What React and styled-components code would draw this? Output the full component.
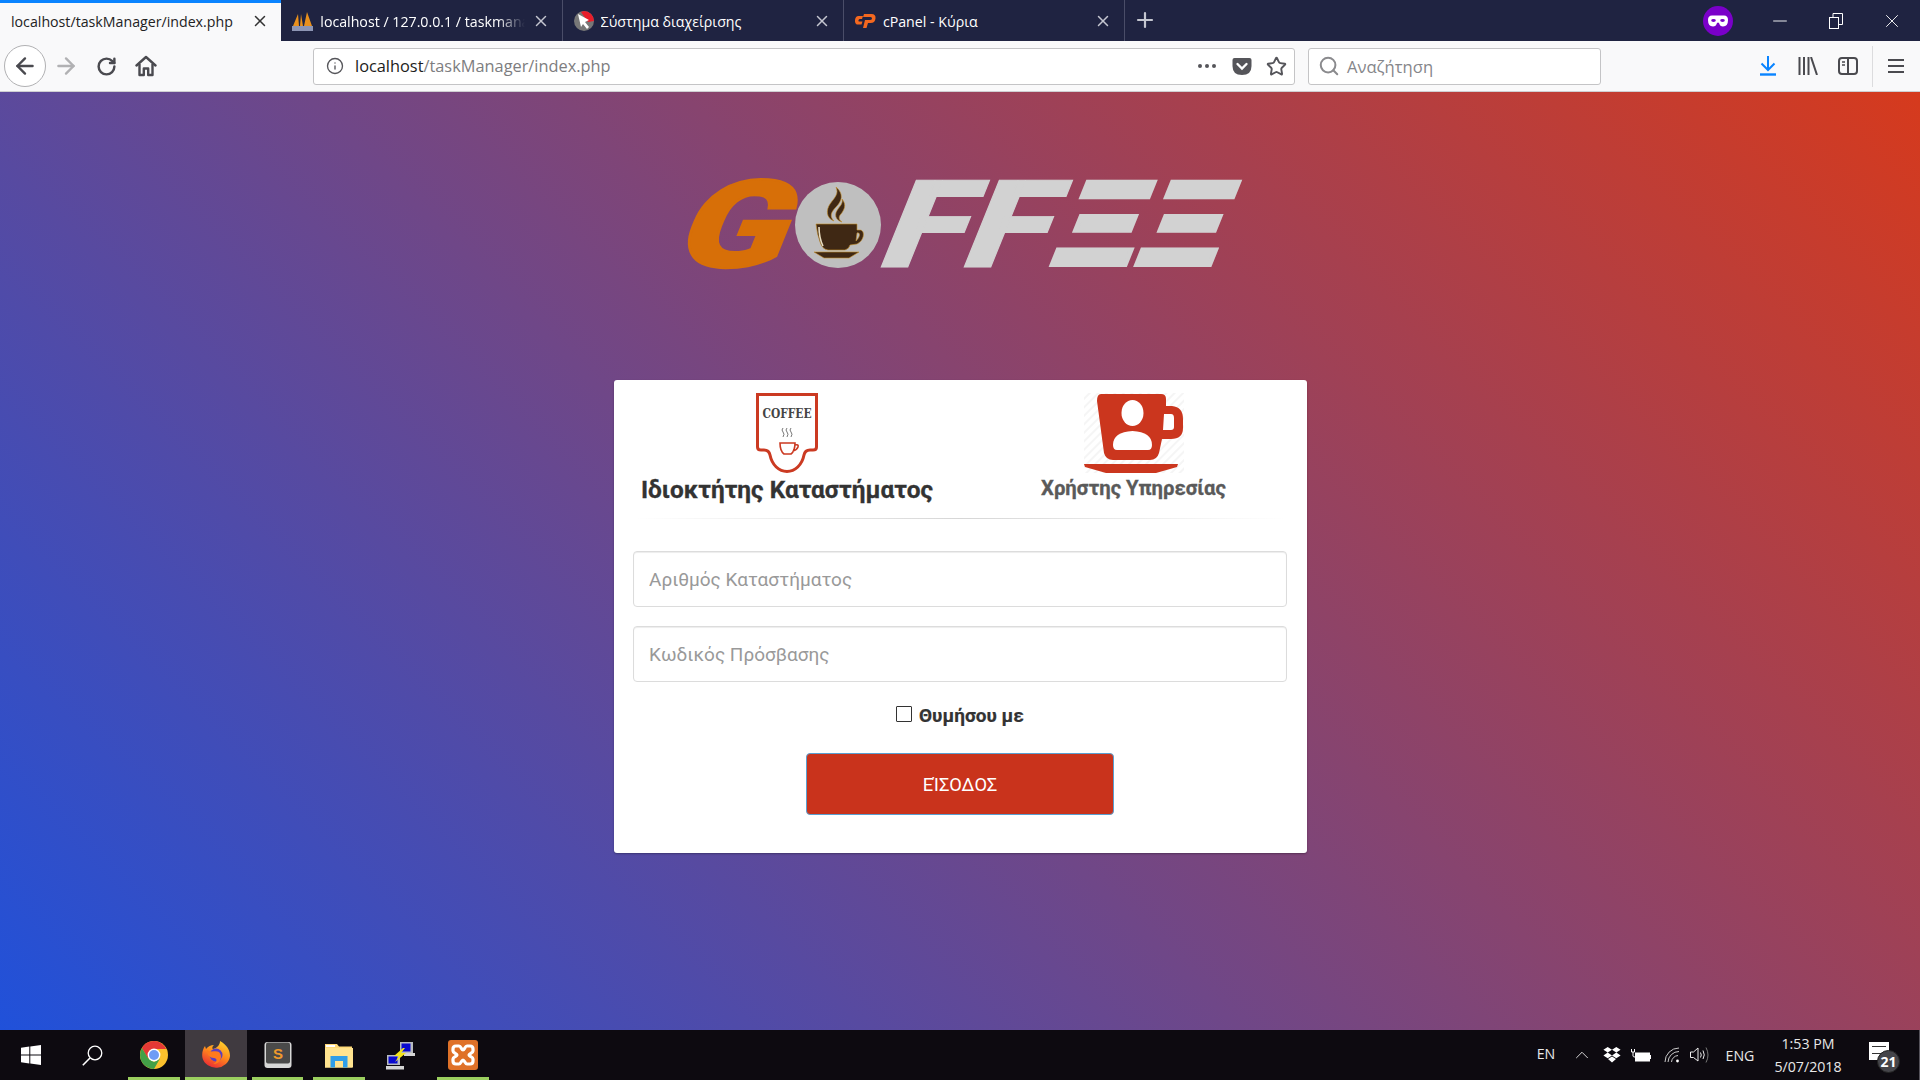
import styled, { createGlobalStyle } from "styled-components";
import { ArrowLeft, ArrowRight, RotateCw, Info, Star, Search, X, Plus, Minus, ChevronUp } from "lucide-react";

const GlobalStyle = createGlobalStyle`
  html, body {
    margin: 0;
    padding: 0;
    height: 100%;
    overflow: hidden;
  }
  * {
    box-sizing: border-box;
  }
`;

const Screen = styled.div`
  width: 1920px;
  height: 1080px;
  display: flex;
  flex-direction: column;
  font-family: "Open Sans", "Noto Sans", sans-serif;
`;

/* browser chrome */
const TabBar = styled.div`
  height: 41px;
  background: #1f2341;
  display: flex;
  align-items: stretch;
  color: #fff;
`;

const Tab = styled.div`
  width: 281.3px;
  display: flex;
  align-items: center;
  gap: 7px;
  padding: 0 12px 0 11px;
  background: ${(p) => (p.$active ? "#f9f9fa" : "transparent")};
  color: ${(p) => (p.$active ? "#222" : "#fff")};
  border-right: ${(p) => (p.$active ? "none" : "1px solid #4a4d68")};
  box-shadow: ${(p) => (p.$active ? "inset 0 3px 0 #0a84ff" : "none")};
`;

const TabTitle = styled.span`
  flex: 1;
  font-size: 14.2px;
  white-space: nowrap;
  overflow: hidden;
  padding-top: 1px;
  mask-image: ${(p) => (p.$fade ? "linear-gradient(to left, transparent, #000 28px)" : "none")};
`;

const TabClose = styled.span`
  width: 18px;
  display: flex;
  justify-content: center;
  color: ${(p) => (p.$active ? "#333" : "#c4c6d0")};
`;

const NewTab = styled.div`
  width: 40px;
  display: flex;
  align-items: center;
  justify-content: center;
  padding-bottom: 2px;
  color: #c4c6d0;
`;

const TabSpacer = styled.div`
  flex: 1;
`;

const MaskBadge = styled.div`
  width: 30px;
  height: 30px;
  border-radius: 50%;
  background: #7a00c9;
  align-self: center;
  display: flex;
  align-items: center;
  justify-content: center;
  margin-right: 19px;
`;

const WinButton = styled.div`
  width: 56px;
  display: flex;
  align-items: center;
  justify-content: center;
  color: #fff;
`;

const Toolbar = styled.div`
  height: 51px;
  background: #f9f9fa;
  border-bottom: 1px solid #cfcfd2;
  display: flex;
  align-items: center;
  color: #4a4a4f;
`;

const BackButton = styled.div`
  width: 42px;
  height: 42px;
  margin-left: 4px;
  border: 1px solid #b1b1b3;
  border-radius: 50%;
  background: #fff;
  display: flex;
  align-items: center;
  justify-content: center;
`;

const ToolButton = styled.div`
  width: 40px;
  display: flex;
  justify-content: center;
  align-items: center;
  color: ${(p) => p.$color || "#4a4a4f"};
`;

const UrlBar = styled.div`
  width: 982px;
  height: 37px;
  margin-left: 147px;
  background: #fff;
  border: 1px solid #c4c4c6;
  border-radius: 3px;
  display: flex;
  align-items: center;
  padding: 0 0 0 12px;
`;

const UrlText = styled.span`
  flex: 1;
  margin-left: 11px;
  font-size: 16.35px;
  color: #7d7d80;
  b {
    font-weight: 400;
    color: #1c1c20;
  }
`;

const UrlAction = styled.span`
  width: 35px;
  display: flex;
  justify-content: center;
  align-items: center;
  color: #55555a;
`;

const SearchBar = styled.div`
  width: 293px;
  height: 37px;
  margin: 0 147px 0 13px;
  background: #fff;
  border: 1px solid #c4c4c6;
  border-radius: 3px;
  display: flex;
  align-items: center;
  gap: 7px;
  padding-left: 9px;
  font-size: 16.6px;
  color: #86868a;
`;

const ToolSeparator = styled.div`
  width: 1px;
  height: 41px;
  margin: 0 3px 0 4px;
  background: #dcdcde;
`;

/* login page */
const Page = styled.main`
  flex: 1;
  display: flex;
  flex-direction: column;
  align-items: center;
  background: linear-gradient(45deg, #2051da, #d63a1d);
`;

const LogoBox = styled.svg`
  display: block;
  width: 590px;
  height: 120px;
  margin: 68px 0 100px 10px;
  overflow: visible;
`;

const LogoLetter = styled.text`
  font-family: Roboto, "Liberation Sans", sans-serif;
  font-weight: 900;
  font-size: ${(p) => p.$size || 122}px;
  fill: ${(p) => p.$fill};
  stroke: ${(p) => p.$fill};
  stroke-width: ${(p) => p.$stroke || 0}px;
`;

const Card = styled.section`
  width: 693px;
  height: 473px;
  background: #fff;
  border-radius: 3px;
  padding: 13px 0 0;
  box-shadow: 0 1px 2px rgba(0, 0, 0, 0.3);
`;

const RoleRow = styled.div`
  display: grid;
  grid-template-columns: 347px 346px;
  height: 125px;
`;

const Role = styled.div`
  display: flex;
  flex-direction: column;
  align-items: center;
`;

const RoleIcon = styled.svg`
  display: block;
  height: 80px;
  width: ${(p) => p.$w}px;
`;

const RoleTitle = styled.div`
  font-family: Roboto, "Liberation Sans", sans-serif;
  font-weight: 700;
  font-size: ${(p) => (p.$current ? "24.4px" : "20.3px")};
  line-height: 30px;
  margin-top: ${(p) => (p.$current ? "2px" : "0")};
  -webkit-text-stroke: 0.3px currentColor;
  color: ${(p) => (p.$current ? "#333" : "#5a5a5a")};
`;

const Divider = styled.div`
  height: 1px;
  margin: 0 19px;
  background: linear-gradient(to right, rgba(0, 0, 0, 0), rgba(0, 0, 0, 0.16), rgba(0, 0, 0, 0));
`;

const Form = styled.form`
  display: flex;
  flex-direction: column;
  align-items: center;
  padding: 32px 19px 0;
`;

const Field = styled.input`
  width: 654px;
  height: 56px;
  margin-bottom: 19px;
  padding: 0 15px;
  border: 1px solid #dcdcdc;
  border-radius: 4px;
  background: #fff;
  box-shadow: inset 0 1px 1px rgba(0, 0, 0, 0.075);
  font-family: Roboto, "Liberation Sans", sans-serif;
  font-size: 19px;
  outline: none;
  &::placeholder {
    color: #999;
    opacity: 1;
  }
`;

const Remember = styled.label`
  display: flex;
  align-items: center;
  gap: 7px;
  height: 24px;
  margin-top: 2px;
  font-family: Roboto, "Liberation Sans", sans-serif;
  font-weight: 700;
  font-size: 19px;
  -webkit-text-stroke: 0.2px currentColor;
  color: #333;
`;

const Tick = styled.span`
  display: block;
  width: 16px;
  height: 16px;
  border: 1px solid #333;
  border-radius: 1px;
  background: #fff;
  margin-top: -2px;
`;

const Submit = styled.button`
  width: 308px;
  height: 62px;
  margin-top: 26px;
  background: #c9331c;
  border: 1px solid #5a9fd0;
  border-radius: 4px;
  color: #fff;
  font-family: Roboto, "Liberation Sans", sans-serif;
  font-size: 18.3px;
`;

/* windows taskbar */
const Taskbar = styled.footer`
  height: 50px;
  background: #0d0a10;
  display: flex;
  align-items: stretch;
  color: #e8e8e8;
`;

const TaskItem = styled.div`
  width: ${(p) => (p.$active ? "61.7px" : p.$running ? "51.7px" : "61.7px")};
  margin: 0 ${(p) => (p.$running && !p.$active ? "5px" : "0")};
  display: flex;
  align-items: center;
  justify-content: center;
  background: ${(p) => (p.$active ? "#403a40" : "transparent")};
  box-shadow: ${(p) => (p.$running ? "inset 0 -3px 0 #9bcf5f" : "none")};
`;

const Tray = styled.div`
  margin-left: auto;
  display: flex;
  align-items: stretch;
  border-right: 1px solid #55525a;
  padding-right: 13px;
  font-size: 14.2px;
`;

const TrayItem = styled.div`
  width: ${(p) => p.$w}px;
  display: flex;
  flex-direction: column;
  align-items: center;
  justify-content: center;
  padding-bottom: ${(p) => p.$lift || 0}px;
`;

const Clock = styled.div`
  display: flex;
  flex-direction: column;
  align-items: center;
  gap: 4px;
  line-height: 19px;
`;

const NoticeWrap = styled.div`
  position: relative;
  width: 20px;
  height: 18px;
  margin: 0 0 9px 0;
  background: #fff;
`;

const NoticeLines = styled.div`
  margin: 4px 3px 0;
  height: 8px;
  border-top: 1px solid #333;
  border-bottom: 1px solid #333;
`;

const NoticeBadge = styled.div`
  position: absolute;
  left: 8px;
  top: 8px;
  width: 23px;
  height: 23px;
  border-radius: 50%;
  background: #45454a;
  border: 1px solid #222;
  color: #fff;
  font-weight: 700;
  font-size: 14px;
  line-height: 21px;
  text-align: center;
`;

const PmaIcon = () => (
  <svg width="21" height="20" viewBox="0 0 21 20">
    <path d="M1 15 L6 3 L7 15Z M8 15 L9 3 L11 15Z M12 15 L15 1 L20 15Z" fill="#e9901c" />
    <rect x="0" y="15" width="21" height="5" fill="#8d95b4" />
  </svg>
);

const CursorIcon = () => (
  <svg width="20" height="20" viewBox="0 0 20 20">
    <circle cx="10" cy="10" r="10" fill="#777" />
    <path d="M10 0 A10 10 0 0 1 20 10 L14 11 L7 1Z" fill="#e81d2a" />
    <path d="M4 3 L15 9 L11 11 L15 16 L13 18 L9 13 L7 16Z" fill="#fff" />
  </svg>
);

const CpanelIcon = () => (
  <svg width="21" height="20" viewBox="0 0 21 20">
    <path d="M8 5 H3.5 Q0.5 5 0 9 Q-0.3 13.5 3 13.5 H6.5 L7.5 10.5 H4 Q3.2 10.5 3.5 9.2 Q3.8 8 5 8 H7Z" fill="#f4681f" />
    <path d="M9 3 H16.5 Q21 3 20.5 7.5 Q20 12 15.5 12 H13 L11.5 17 H8 L10 9 H15 Q16.8 9 17 7.5 Q17.2 6 15.5 6 H8Z" fill="#f4681f" />
  </svg>
);

const MaskIcon = () => (
  <svg width="20" height="12" viewBox="0 0 20 12">
    <path d="M4 0.5 H16 Q20 0.5 20 5 Q20 11.5 15 11.5 Q12 11.5 11 8 Q10 7 9 8 Q8 11.5 5 11.5 Q0 11.5 0 5 Q0 0.5 4 0.5Z" fill="#fff" />
    <ellipse cx="5.5" cy="5.5" rx="2.3" ry="1.4" fill="#7a00c9" />
    <ellipse cx="14.5" cy="5.5" rx="2.3" ry="1.4" fill="#7a00c9" />
  </svg>
);

const RestoreIcon = () => (
  <svg width="14" height="16" viewBox="0 0 14 16" fill="none" stroke="#fff" strokeWidth="1">
    <rect x="0.5" y="4.5" width="9" height="11" />
    <path d="M4 4 V0.5 H13.5 V11.5 H10" />
  </svg>
);

const HouseIcon = () => (
  <svg width="22" height="22" viewBox="0 0 22 22" fill="none" stroke="#4a4a4f" strokeWidth="2.4" strokeLinejoin="round">
    <path d="M1.5 10.5 L11 2 L20.5 10.5" strokeLinecap="round" />
    <path d="M4.5 9 V20 H8.8 V13.5 H13.2 V20 H17.5 V9" />
  </svg>
);

const PocketIcon = () => (
  <svg width="20" height="19" viewBox="0 0 20 19">
    <path d="M2.5 1 H17.5 Q19.5 1 19.5 3 V9 Q19.5 18 10 18 Q0.5 18 0.5 9 V3 Q0.5 1 2.5 1Z" fill="#55555a" />
    <path d="M5.5 7 L10 11.5 L14.5 7" fill="none" stroke="#fff" strokeWidth="2.4" strokeLinecap="round" />
  </svg>
);

const DownloadIcon = () => (
  <svg width="18" height="20" viewBox="0 0 18 20" fill="none" stroke="#0a84ff" strokeWidth="2">
    <path d="M9 0 V13 M2.5 7.5 L9 14 L15.5 7.5" />
    <path d="M1 18.5 H17" strokeWidth="2.4" />
  </svg>
);

const LibraryIcon = () => (
  <svg width="20" height="18" viewBox="0 0 20 18" fill="none" stroke="#4a4a4f" strokeWidth="2">
    <path d="M1.5 0 V18 M6 0 V18 M10.5 0 V18 M13 0 L19 18" />
  </svg>
);

const SidebarIcon = () => (
  <svg width="20" height="18" viewBox="0 0 20 18" fill="none" stroke="#4a4a4f" strokeWidth="2">
    <rect x="1" y="1" width="18" height="16" rx="3" />
    <path d="M10 1 V17" />
    <path d="M4 5 H7 M4 8 H7" strokeWidth="1.6" />
  </svg>
);

const MenuIcon = () => (
  <svg width="16" height="14" viewBox="0 0 16 14" fill="#4a4a4f">
    <rect width="16" height="2" />
    <rect y="6" width="16" height="2" />
    <rect y="12" width="16" height="2" />
  </svg>
);

const WindowsIcon = () => (
  <svg width="20" height="20" viewBox="0 0 20 20" fill="#fff">
    <path d="M0 2.8 L8.3 1.6 V9.5 H0Z M9.3 1.5 L20 0 V9.5 H9.3Z M0 10.5 H8.3 V18.4 L0 17.2Z M9.3 10.5 H20 V20 L9.3 18.5Z" />
  </svg>
);

const TaskSearchIcon = () => (
  <svg width="21" height="21" viewBox="0 0 21 21" fill="none" stroke="#fff" strokeWidth="1.3">
    <circle cx="13" cy="8" r="6.8" />
    <path d="M8 13 L0.8 20.3" strokeWidth="1.6" />
  </svg>
);

const ChromeIcon = () => (
  <svg width="28" height="28" viewBox="0 0 28 28">
    <circle cx="14" cy="14" r="14" fill="#fbc02d" />
    <path d="M14 0 A14 14 0 0 0 1.9 7 L8 17.5 L14 8 H26.1 A14 14 0 0 0 14 0Z" fill="#e53935" />
    <path d="M1.9 7 A14 14 0 0 0 14 28 L20 17.5 L14 21 L8 17Z" fill="#43a047" />
    <circle cx="14" cy="14" r="6.4" fill="#fff" />
    <circle cx="14" cy="14" r="5" fill="#6f9cf5" />
  </svg>
);

const FirefoxIcon = () => (
  <svg width="28" height="28" viewBox="0 0 28 28">
    <defs>
      <linearGradient id="foxFlame" x1="0.8" y1="0" x2="0.3" y2="1">
        <stop offset="0" stopColor="#ffd52e" />
        <stop offset="0.5" stopColor="#ff8a1c" />
        <stop offset="1" stopColor="#ea2a35" />
      </linearGradient>
    </defs>
    <path d="M18 0 C25 4 28 9 28 15 A14 13 0 0 1 0.5 17 C-0.5 12 1 8 3 5 L4 8 C6 5.5 9 4 12 4 C10 6 10 7.5 11 8 C15 7 18 4 18 0Z" fill="url(#foxFlame)" />
    <circle cx="14" cy="14" r="6.5" fill="#5a3fc0" />
    <path d="M5 9 C8 12 14 9 17 11 C21 15 19 23 11 23 C16 21 15 17 12 17 C8 17 5 14 5 9Z" fill="#ff7a1c" />
  </svg>
);

const SublimeIcon = () => (
  <svg width="28" height="28" viewBox="0 0 28 28">
    <rect x="0.5" y="1" width="27" height="26" rx="3" fill="#d8d8d8" />
    <rect x="2" y="1.5" width="24" height="21" rx="2" fill="#4a4a4a" />
    <text x="14" y="18" textAnchor="middle" fontFamily="Liberation Sans, sans-serif" fontWeight="700" fontSize="15" fill="#f09a2c">
      S
    </text>
  </svg>
);

const FolderIcon = () => (
  <svg width="28" height="25" viewBox="0 0 28 25">
    <path d="M0 1 H12 L14 3.5 H27 V24.5 H0Z" fill="#ffd978" />
    <path d="M0 5 H28 V24.5 H0Z" fill="#ffe38f" />
    <path d="M5.5 24.5 V13 H22.5 V24.5 H18 V18 H10 V24.5Z" fill="#2f9ee8" />
    <rect x="1" y="2" width="9" height="2" fill="#fff" />
  </svg>
);

const NetworkIcon = () => (
  <svg width="29" height="29" viewBox="0 0 29 29">
    <rect x="14" y="1" width="13" height="11" fill="#b8bcc0" />
    <rect x="15.5" y="2.5" width="9" height="8" fill="#0a0ad0" />
    <rect x="18" y="12" width="11" height="3" fill="#d5d5d5" />
    <rect x="1" y="14" width="13" height="10" fill="#b8bcc0" />
    <rect x="2.5" y="15.5" width="9" height="7" fill="#0a0ad0" />
    <rect x="0" y="25" width="18" height="3.5" fill="#d5d5d5" />
    <path d="M17 7 L8 15 L13 15 L9 21 L20 12 L15 12 L19 7Z" fill="#f5e61c" />
  </svg>
);

const XamppIcon = () => (
  <svg width="30" height="30" viewBox="0 0 30 30">
    <rect width="30" height="30" rx="3" fill="#df7128" />
    <path d="M8 6 H11 C13 6 13.5 10 15 10 C16.5 10 17 6 19 6 H22 C24 6 25 7 25 9 V11 C25 13 21 13.5 21 15 C21 16.5 25 17 25 19 V21 C25 23 24 24 22 24 H19 C17 24 16.5 20 15 20 C13.5 20 13 24 11 24 H8 C6 24 5 23 5 21 V19 C5 17 9 16.5 9 15 C9 13.5 5 13 5 11 V9 C5 7 6 6 8 6Z" fill="none" stroke="#fff" strokeWidth="3.2" />
  </svg>
);

const DropboxIcon = () => (
  <svg width="18" height="16" viewBox="0 0 18 16" fill="#fff">
    <path d="M4.7 0 L9 2.8 L4.7 5.6 L0.4 2.8Z M13.3 0 L17.6 2.8 L13.3 5.6 L9 2.8Z M4.7 5.6 L9 8.4 L4.7 11.2 L0.4 8.4Z M13.3 5.6 L17.6 8.4 L13.3 11.2 L9 8.4Z M9 9.4 L13 12 L9 15.5 L5 12Z" />
  </svg>
);

const BatteryIcon = () => (
  <svg width="20" height="13" viewBox="0 0 20 13" fill="#fff">
    <path d="M0.5 0 V3 H3.5 V0 M2 3 V7 Q2 8 4 8" fill="none" stroke="#fff" />
    <rect x="4" y="3.5" width="15" height="9" />
    <rect x="19" y="6" width="1" height="4" />
  </svg>
);

const WifiIcon = () => (
  <svg width="16" height="16" viewBox="0 0 16 16" fill="none" stroke="#ccc" strokeWidth="1">
    <path d="M1 15 A14 14 0 0 1 15 1" />
    <path d="M4 15 A11 11 0 0 1 15 4.5" />
    <path d="M7.5 15 A7 7 0 0 1 14 8.5" />
    <circle cx="13.5" cy="14" r="1.4" fill="#fff" stroke="none" />
  </svg>
);

const VolumeIcon = () => (
  <svg width="20" height="16" viewBox="0 0 20 16" fill="none" stroke="#eee" strokeWidth="1">
    <path d="M0.5 5 H3.5 L8 1 V14 L3.5 10.5 H0.5Z" />
    <path d="M10.5 5.5 Q12 8 10.5 10.5 M13 3.5 Q15.5 8 13 12" />
    <path d="M16 0.5 Q20 8 16 15.5" stroke="#777" />
  </svg>
);

const LogoArt = () => (
  <LogoBox viewBox="0 0 590 120" role="img" aria-label="GOFFEE">
    <LogoLetter $fill="#d76f08" $stroke={2} transform="translate(0 107) skewX(-22) scale(1.31 1)">
      G
    </LogoLetter>
    <circle cx="168" cy="65" r="43" fill="#bfbfbf" />
    <g transform="translate(110 10)" stroke="#c8902a" strokeWidth="0.6" fill="#3f2814">
      <path d="M56 17 C64 24 62 31 56 37 C50 43 50 47 54 51 C46 48 46 40 50 34 C55 27 59 24 56 17Z" />
      <path d="M62 29 C67 35 64 40 61 44 C58 47 59 50 62 52 C55 50 54 44 58 39 C61 35 63 33 62 29Z" />
      <path d="M36 54 H77 V60 H80 C85 60 85 70 77 74 L70 75 Q69 79 65 80 H48 Q42 79 40 72 Q37 64 36 54Z" />
      <path d="M77 63 C80 62 81 66 76 71Z" fill="#bfbfbf" />
      <path d="M34 82 H79 L69 88 H44Z" />
      <path d="M39 57 Q39 68 43 76" stroke="#e8dcc0" strokeWidth="1.6" fill="none" />
    </g>
    <LogoLetter $fill="#d2d2d2" $stroke={1} transform="translate(203 107) skewX(-22) scale(1.26 1)">
      F
    </LogoLetter>
    <LogoLetter $fill="#d2d2d2" $stroke={1} transform="translate(286 107) skewX(-22) scale(1.26 1)">
      F
    </LogoLetter>
    <LogoLetter $fill="#d2d2d2" $stroke={4} $size={117} transform="translate(376 105) skewX(-22) scale(1.27 1)">
      Ξ
    </LogoLetter>
    <LogoLetter $fill="#d2d2d2" $stroke={4} $size={117} transform="translate(460.5 105) skewX(-22) scale(1.27 1)">
      Ξ
    </LogoLetter>
  </LogoBox>
);

const OwnerBadge = () => (
  <RoleIcon $w={64} viewBox="15 8 64 80">
    <path
      d="M17.5 9.5H76.5V62Q76.5 65 73 65H70Q65 65 64 70C62 80 55 86.5 47 86.5S32 80 30 70Q29 65 24 65H21Q17.5 65 17.5 62Z"
      fill="#fff"
      stroke="#cb3a22"
      strokeWidth="3"
    />
    <text x="47" y="33" textAnchor="middle" textLength="49" lengthAdjust="spacingAndGlyphs" fontFamily="DejaVu Serif, serif" fontWeight="700" fontSize="12.5" fill="#444">
      COFFEE
    </text>
    <path d="M43 43 q-2 2 0 4 q2 2 0 5 M47 43 q-2 2 0 4 q2 2 0 5 M51 43 q-2 2 0 4 q2 2 0 5" fill="none" stroke="#777" strokeWidth="1" />
    <path d="M40 58 H55 Q55 66 51 69 H44 Q40 66 40 58Z M55 60 Q59 59 58 62 Q57 65 53 66" fill="none" stroke="#cb3a22" strokeWidth="1.6" />
  </RoleIcon>
);

const CustomerCup = () => (
  <RoleIcon $w={100} viewBox="13 8 100 80">
    <defs>
      <pattern id="cupHatch" width="6" height="6" patternUnits="userSpaceOnUse" patternTransform="rotate(-45)">
        <rect width="6" height="2" fill="#f5f5f5" />
      </pattern>
    </defs>
    <rect x="13" y="8" width="100" height="80" fill="url(#cupHatch)" />
    <path d="M30 9 H90 Q95 9 95 14 V21 H101 Q112 22 112 34 V43 Q112 54 100 54 H91 L88 68 Q86 75 79 75 H42 Q35 75 33 68 L26 16 Q26 9 30 9Z" fill="#cb361e" />
    <path d="M93 29 H100 Q103 29 103 33 V42 Q103 45 100 45 H92Z" fill="#fff" />
    <ellipse cx="61.5" cy="28" rx="11" ry="13" fill="#fff" />
    <path d="M42 60 Q42 47 61.5 46 Q81 47 81 60 Q81 65 77 65 H46 Q42 65 42 60Z" fill="#fff" />
    <path d="M13 79 H107 L106 82 L85 88 H35 L14 82Z" fill="#cb361e" />
  </RoleIcon>
);

const App = () => {
  return (
    <Screen>
      <GlobalStyle />
      <TabBar>
        <Tab $active>
          <TabTitle>localhost/taskManager/index.php</TabTitle>
          <TabClose $active>
            <X size={18} strokeWidth={2} />
          </TabClose>
        </Tab>
        <Tab>
          <PmaIcon />
          <TabTitle $fade>localhost / 127.0.0.1 / taskmanager</TabTitle>
          <TabClose>
            <X size={18} strokeWidth={2} />
          </TabClose>
        </Tab>
        <Tab>
          <CursorIcon />
          <TabTitle>Σύστημα διαχείρισης</TabTitle>
          <TabClose>
            <X size={18} strokeWidth={2} />
          </TabClose>
        </Tab>
        <Tab>
          <CpanelIcon />
          <TabTitle>cPanel - Κύρια</TabTitle>
          <TabClose>
            <X size={18} strokeWidth={2} />
          </TabClose>
        </Tab>
        <NewTab>
          <Plus size={24} strokeWidth={2.2} />
        </NewTab>
        <TabSpacer />
        <MaskBadge>
          <MaskIcon />
        </MaskBadge>
        <WinButton>
          <Minus size={22} strokeWidth={1} />
        </WinButton>
        <WinButton>
          <RestoreIcon />
        </WinButton>
        <WinButton>
          <X size={22} strokeWidth={1} />
        </WinButton>
      </TabBar>
      <Toolbar>
        <BackButton>
          <ArrowLeft size={26} strokeWidth={2.2} />
        </BackButton>
        <ToolButton $color="#b1b1b3">
          <ArrowRight size={26} strokeWidth={2.2} />
        </ToolButton>
        <ToolButton>
          <RotateCw size={21} strokeWidth={2.8} />
        </ToolButton>
        <ToolButton>
          <HouseIcon />
        </ToolButton>
        <UrlBar>
          <Info size={18} strokeWidth={1.8} color="#55555a" />
          <UrlText>
            <b>localhost</b>/taskManager/index.php
          </UrlText>
          <UrlAction>
            <svg width="18" height="4" viewBox="0 0 18 4" fill="#55555a">
              <circle cx="2" cy="2" r="2" />
              <circle cx="9" cy="2" r="2" />
              <circle cx="16" cy="2" r="2" />
            </svg>
          </UrlAction>
          <UrlAction>
            <PocketIcon />
          </UrlAction>
          <UrlAction>
            <Star size={21} strokeWidth={2.2} />
          </UrlAction>
        </UrlBar>
        <SearchBar>
          <Search size={22} strokeWidth={2.2} color="#8a8a8d" />
          <span>Αναζήτηση</span>
        </SearchBar>
        <ToolButton>
          <DownloadIcon />
        </ToolButton>
        <ToolButton>
          <LibraryIcon />
        </ToolButton>
        <ToolButton>
          <SidebarIcon />
        </ToolButton>
        <ToolSeparator />
        <ToolButton>
          <MenuIcon />
        </ToolButton>
      </Toolbar>
      <Page>
        <LogoArt />
        <Card>
          <RoleRow>
            <Role>
              <OwnerBadge />
              <RoleTitle $current>Ιδιοκτήτης Καταστήματος</RoleTitle>
            </Role>
            <Role>
              <CustomerCup />
              <RoleTitle>Χρήστης Υπηρεσίας</RoleTitle>
            </Role>
          </RoleRow>
          <Divider />
          <Form>
            <Field placeholder="Αριθμός Καταστήματος" />
            <Field placeholder="Κωδικός Πρόσβασης" />
            <Remember>
              <Tick />
              Θυμήσου με
            </Remember>
            <Submit type="button">ΕΊΣΟΔΟΣ</Submit>
          </Form>
        </Card>
      </Page>
      <Taskbar>
        <TaskItem>
          <WindowsIcon />
        </TaskItem>
        <TaskItem>
          <TaskSearchIcon />
        </TaskItem>
        <TaskItem $running>
          <ChromeIcon />
        </TaskItem>
        <TaskItem $running $active>
          <FirefoxIcon />
        </TaskItem>
        <TaskItem $running>
          <SublimeIcon />
        </TaskItem>
        <TaskItem $running>
          <FolderIcon />
        </TaskItem>
        <TaskItem>
          <NetworkIcon />
        </TaskItem>
        <TaskItem $running>
          <XamppIcon />
        </TaskItem>
        <Tray>
          <TrayItem $w={32} $lift={4}>
            EN
          </TrayItem>
          <TrayItem $w={40}>
            <ChevronUp size={22} strokeWidth={1} />
          </TrayItem>
          <TrayItem $w={20}>
            <DropboxIcon />
          </TrayItem>
          <TrayItem $w={38}>
            <BatteryIcon />
          </TrayItem>
          <TrayItem $w={24}>
            <WifiIcon />
          </TrayItem>
          <TrayItem $w={32}>
            <VolumeIcon />
          </TrayItem>
          <TrayItem $w={48}>ENG</TrayItem>
          <TrayItem $w={88}>
            <Clock>
              <span>1:53 PM</span>
              <span>5/07/2018</span>
            </Clock>
          </TrayItem>
          <TrayItem $w={54}>
            <NoticeWrap>
              <NoticeLines />
              <NoticeBadge>21</NoticeBadge>
            </NoticeWrap>
          </TrayItem>
        </Tray>
      </Taskbar>
    </Screen>
  );
};

export default App;
